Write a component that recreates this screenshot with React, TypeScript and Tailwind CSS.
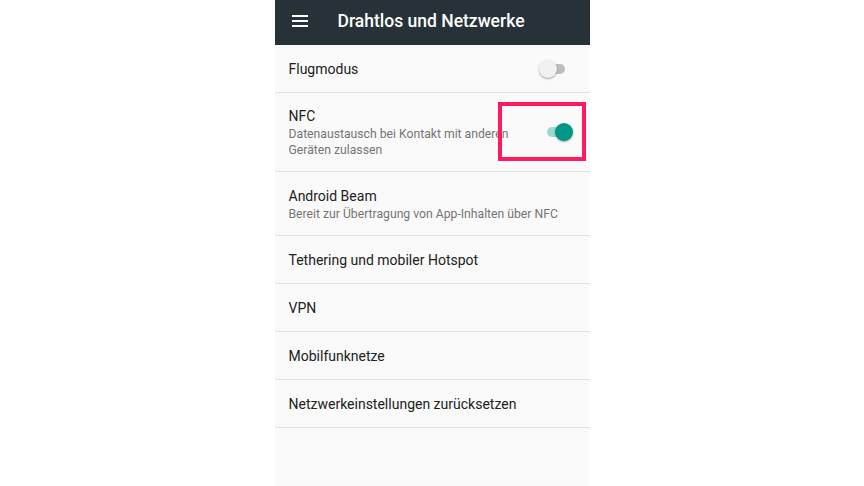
type Row = { title: string; subtitle?: string; height: string; toggle?: 'on' | 'off' };

const rows: Row[] = [
    { title: 'Flugmodus', height: 'h-[48px]', toggle: 'off' },
    { title: 'NFC', subtitle: 'Datenaustausch bei Kontakt mit anderen Geräten zulassen', height: 'h-[79px]', toggle: 'on' },
    { title: 'Android Beam', subtitle: 'Bereit zur Übertragung von App-Inhalten über NFC', height: 'h-[64px]' },
    { title: 'Tethering und mobiler Hotspot', height: 'h-[48px]' },
    { title: 'VPN', height: 'h-[48px]' },
    { title: 'Mobilfunknetze', height: 'h-[48px]' },
    { title: 'Netzwerkeinstellungen zurücksetzen', height: 'h-[48px]' },
];

function Toggle({ on }: { on: boolean }) {
    return (
        <div className={`relative h-[18px] w-[30px] ${on ? 'translate-x-[3px]' : '-translate-x-[1px]'}`}>
            <div
                className={`absolute left-[4px] top-[4px] h-[10px] w-[22px] rounded-full ${on ? 'bg-[#9fd6d0]' : 'bg-[#bdbdbd]'}`}
            />
            <div
                className={`absolute top-0 h-[18px] w-[18px] rounded-full shadow-[0_1px_2px_rgba(0,0,0,0.35)] ${on ? 'right-0 bg-[#009688]' : 'left-0 bg-[#f1f1f1]'}`}
            />
        </div>
    );
}

export default function App() {
    return (
        <div className="flex h-[486px] w-full justify-center bg-white font-['Roboto',sans-serif]">
            <div className="relative flex w-[315px] flex-col bg-[#fafafa]">
                <div className="flex h-[45px] shrink-0 items-center bg-[#263238] pb-[3px] pl-[17px] text-white">
                    <div className="flex w-[16px] flex-col gap-[3px]">
                        <span className="h-[2px] bg-white" />
                        <span className="h-[2px] bg-white" />
                        <span className="h-[2px] bg-white" />
                    </div>
                    <span className="ml-[30px] text-[17.5px] font-medium">Drahtlos und Netzwerke</span>
                </div>
                {rows.map((row) => (
                    <div
                        key={row.title}
                        className={`flex ${row.height} shrink-0 items-center border-b border-[#e2e2e2] pl-[14px] pr-[20px]`}
                    >
                        <div className={`flex flex-col ${row.toggle ? 'w-[240px]' : 'flex-1'}`}>
                            <span className="text-[14px] leading-[20px] text-[#212121]">{row.title}</span>
                            {row.subtitle && (
                                <span className="text-[12.2px] leading-[16px] text-[#757575]">{row.subtitle}</span>
                            )}
                        </div>
                        {row.toggle && (
                            <div className="ml-auto">
                                <Toggle on={row.toggle === 'on'} />
                            </div>
                        )}
                    </div>
                ))}
                <div className="absolute left-[223px] top-[102px] h-[59px] w-[88px] border-4 border-[#ff1a60]" />
            </div>
        </div>
    );
}
